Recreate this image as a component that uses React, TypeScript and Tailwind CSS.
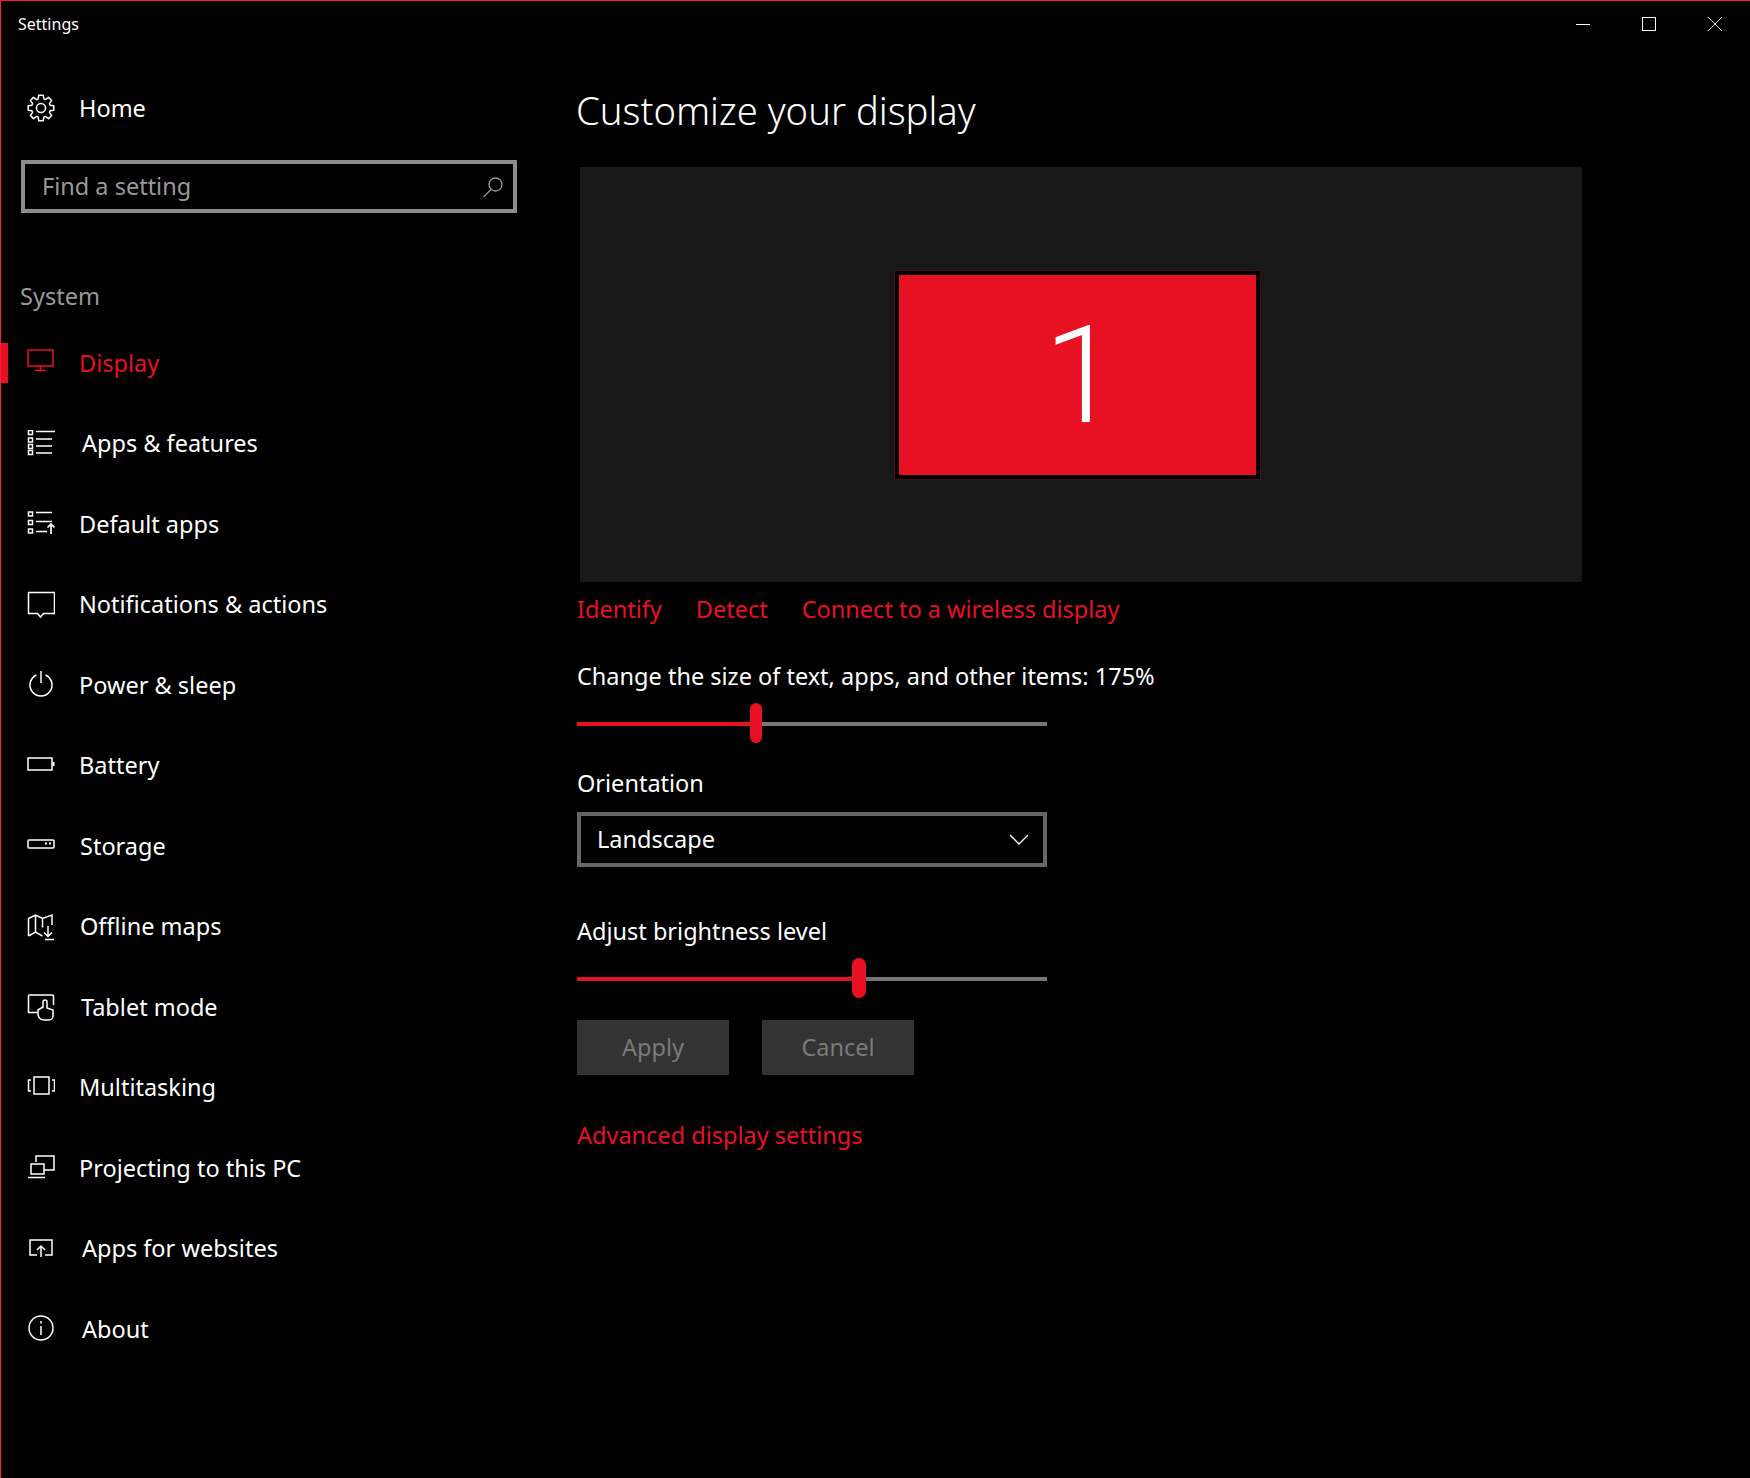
import React from "react"

const Icon = ({ children, className = "text-white" }: { children: React.ReactNode, className?: string }) => (
    <svg viewBox="0 0 28 28" width={28} height={28} fill="none" stroke="currentColor" strokeWidth={1.5} className={`shrink-0 ${className}`}>
        {children}
    </svg>
)

// eight toothed gear, the lucide one only has six
const gearPath = () => {
    const pts: string[] = []
    for (let i = 0; i < 8; i++) {
        const a = (i * Math.PI) / 4
        const at = (r: number, d: number) => `${(14 + r * Math.sin(a + d)).toFixed(2)} ${(14 - r * Math.cos(a + d)).toFixed(2)}`
        pts.push(`${i === 0 ? "M" : "L"}${at(9.5, -0.3)}`, `L${at(13, -0.17)}`, `L${at(13, 0.17)}`, `L${at(9.5, 0.3)}`)
    }
    return pts.join(" ") + "Z"
}

const icons: Record<string, React.ReactNode> = {
    display: <><rect x="1" y="1" width="25" height="16" /><path d="M13.5 17v4M8 21.500h11" /></>,
    apps: <><path d="M1.500 .5h4v4h-4zM1.500 8h4v4h-4zM1.500 14.500h4v4h-4zM1.500 20.500h4v4h-4z" strokeWidth={1.500} /><path d="M9 1.500h19M9 9h16M9 16h16M9 23h16" strokeWidth={1.700} /></>,
    defaults: <><path d="M1.500 2h4v4h-4zM1.500 10.500h4v4h-4zM1.500 19h4v4h-4z" strokeWidth={1.500} /><path d="M9 2.500h16M9 11.500h16M9 21.500h11M24 24v-10M20.500 17.500l3.500-3.500 3.500 3.500" strokeWidth={1.700} /></>,
    bell: <path d="M1.500 1.500h26v21H16.500L13.500 26l-3-3.500H1.500z" />,
    power: <><path d="M9.500 4a11 11 0 1 0 9 0" /><path d="M14 0v12" /></>,
    battery: <><rect x="1" y="6" width="24" height="12" /><path d="M26.500 10v4" strokeWidth={2} /></>,
    storage: <><rect x="1" y="8" width="26" height="8" rx="1" /><path d="M18 11.500h2M22 11.500h2" strokeWidth={2} /></>,
    maps: <><path d="M1.500 23V5.500L8.500 2l7 3.500L25 2v10M15.500 5.500v9M8.500 2v17M1.500 23l7-4 7 4" /><path d="M21 13v10M17 19.500l4 4 4-4M18 26.500h9" /></>,
    tablet: <><path d="M11 19.500H1.500V3a1 1 0 0 1 1-1h23a1 1 0 0 1 1 1v9" /><path d="M16 14V9a2 2 0 0 1 4 0v6l6 2v6a4 4 0 0 1-4 4h-5a6 6 0 0 1-6-6v-4l5-3z" /></>,
    multi: <><rect x="7" y="3" width="15" height="17" /><path d="M4 6H1.500v11H4M25 6h2.500v11H25" /></>,
    project: <><path d="M9 8V2h18v14H17" /><rect x="4" y="10" width="13" height="10" /><path d="M1 23.500h17" /></>,
    web: <><path d="M10 20H3V5h22v15h-7" /><path d="M14 22V11M10 15l4-4 4 4" /></>,
    about: <><circle cx="14" cy="13" r="12" /><path d="M14 11v9M14 6v2.500" /></>,
}

const items = [
    { label: "Display", icon: "display", ml: "ml-[24px]", active: true },
    { label: "Apps & features", icon: "apps", ml: "ml-[27px]" },
    { label: "Default apps", icon: "defaults", ml: "ml-[24px]" },
    { label: "Notifications & actions", icon: "bell", ml: "ml-[24px]" },
    { label: "Power & sleep", icon: "power", ml: "ml-[24px]" },
    { label: "Battery", icon: "battery", ml: "ml-[24px]" },
    { label: "Storage", icon: "storage", ml: "ml-[25px]" },
    { label: "Offline maps", icon: "maps", ml: "ml-[25px]" },
    { label: "Tablet mode", icon: "tablet", ml: "ml-[26px]" },
    { label: "Multitasking", icon: "multi", ml: "ml-[24px]" },
    { label: "Projecting to this PC", icon: "project", ml: "ml-[24px]" },
    { label: "Apps for websites", icon: "web", ml: "ml-[27px]" },
    { label: "About", icon: "about", ml: "ml-[27px]" },
]

const Slider = ({ fill, thumb }: { fill: string, thumb: string }) => (
    <div className="w-[470px] h-[40px] flex items-center">
        <div className={`h-[4px] mt-[1px] bg-[#e81123] ${fill}`} />
        <div className={`h-[40px] rounded-full bg-[#e81123] shrink-0 ${thumb}`} />
        <div className="h-[4px] mt-[1px] flex-1 bg-[#767676]" />
    </div>
)

const App = () => {
    return (
        <div className="w-[1750px] h-[1478px] bg-black text-white border-t border-l border-[#f5203a] flex flex-col font-['Noto_Sans',sans-serif] text-[23.500px] overflow-hidden">
            <header className="h-[46px] shrink-0 flex items-center pl-[17px]">
                <span className="text-[16px] flex-1">Settings</span>
                <div className="flex items-center gap-[52px] pr-[28px]">
                    <div className="w-[14px] h-[1px] bg-white" />
                    <div className="w-[14px] h-[14px] border border-white" />
                    <svg viewBox="0 0 14 14" width={14} height={14} stroke="#ddd" strokeWidth={1}><path d="M0 0l14 14M14 0L0 14" /></svg>
                </div>
            </header>
            <div className="flex flex-1">
                <nav className="w-[576px] shrink-0 flex flex-col">
                    <div className="mt-[38px] h-[46px] flex items-center pl-[26px]">
                        <svg viewBox="0 0 28 28" width={28} height={28} fill="none" stroke="white" strokeWidth={1.500} className="shrink-0">
                            <path d={gearPath()} strokeLinejoin="round" />
                            <circle cx="14" cy="14" r="4.500" />
                        </svg>
                        <span className="ml-[24px] mt-[2px]">Home</span>
                    </div>
                    <div className="mt-[29px] ml-[20px] w-[496px] h-[53px] border-[4px] border-[#8c8c8c] flex items-center pl-[17px] pr-[9px]">
                        <span className="flex-1 text-[#999999]">Find a setting</span>
                        <svg viewBox="0 0 22 22" width={22} height={22} fill="none" stroke="#999" strokeWidth={1.300}>
                            <circle cx="13.500" cy="8.500" r="6.500" />
                            <path d="M9 13.500L1.500 21" />
                        </svg>
                    </div>
                    <div className="mt-[66px] h-[34px] leading-[34px] pl-[19px] text-[#999999]">System</div>
                    <div className="mt-[10px] flex flex-col">
                        {items.map(item => (
                            <div key={item.label} className={`h-[80.5px] flex items-center ${item.active ? "text-[#e81123]" : "text-white"}`}>
                                <div className={`w-[7px] h-[40px] shrink-0 ${item.active ? "bg-[#e81123]" : ""}`} />
                                <div className="ml-[19px] flex items-center">
                                    <Icon className="">{icons[item.icon]}</Icon>
                                    <span className={item.ml}>{item.label}</span>
                                </div>
                            </div>
                        ))}
                    </div>
                </nav>
                <main className="flex-1 flex flex-col">
                    <h1 className="mt-[33px] -ml-[1px] h-[60px] leading-[60px] text-[38.2px] font-light">Customize your display</h1>
                    <div className="mt-[27px] ml-[3px] w-[1002px] h-[415px] bg-[#181818] flex items-center pl-[315px]">
                        <div className="w-[365px] h-[208px] bg-[#e81123] border-[4px] border-black outline outline-[1px] outline-[#4d0a10] flex items-center justify-center">
                            <span className="text-[136px] leading-none font-light font-['Roboto',sans-serif] ml-[8px] mt-[2px]">1</span>
                        </div>
                    </div>
                    <div className="mt-[10px] h-[34px] leading-[34px] flex gap-[34px] text-[#e81123]">
                        <span>Identify</span>
                        <span>Detect</span>
                        <span>Connect to a wireless display</span>
                    </div>
                    <div className="mt-[33px] h-[34px] leading-[34px]">Change the size of text, apps, and other items: 175%</div>
                    <div className="mt-[10px]">
                        <Slider fill="w-[173px]" thumb="w-[12px]" />
                    </div>
                    <div className="mt-[23px] h-[34px] leading-[34px]">Orientation</div>
                    <div className="mt-[12px] w-[470px] h-[55px] border-[4px] border-[#666666] flex items-center justify-between pl-[16px] pr-[14px]">
                        <span>Landscape</span>
                        <svg viewBox="0 0 20 12" width={20} height={12} fill="none" stroke="white" strokeWidth={1.300}><path d="M1 1l9 9 9-9" /></svg>
                    </div>
                    <div className="mt-[47px] h-[34px] leading-[34px]">Adjust brightness level</div>
                    <div className="mt-[10px]">
                        <Slider fill="w-[275px]" thumb="w-[14px]" />
                    </div>
                    <div className="mt-[22px] flex gap-[33px]">
                        <button className="w-[152px] h-[55px] bg-[#333333] text-[#7a7a7a]">Apply</button>
                        <button className="w-[152px] h-[55px] bg-[#333333] text-[#7a7a7a]">Cancel</button>
                    </div>
                    <div className="mt-[43px] h-[34px] leading-[34px] text-[#e81123]">Advanced display settings</div>
                </main>
            </div>
        </div>
    )
}

export default App
